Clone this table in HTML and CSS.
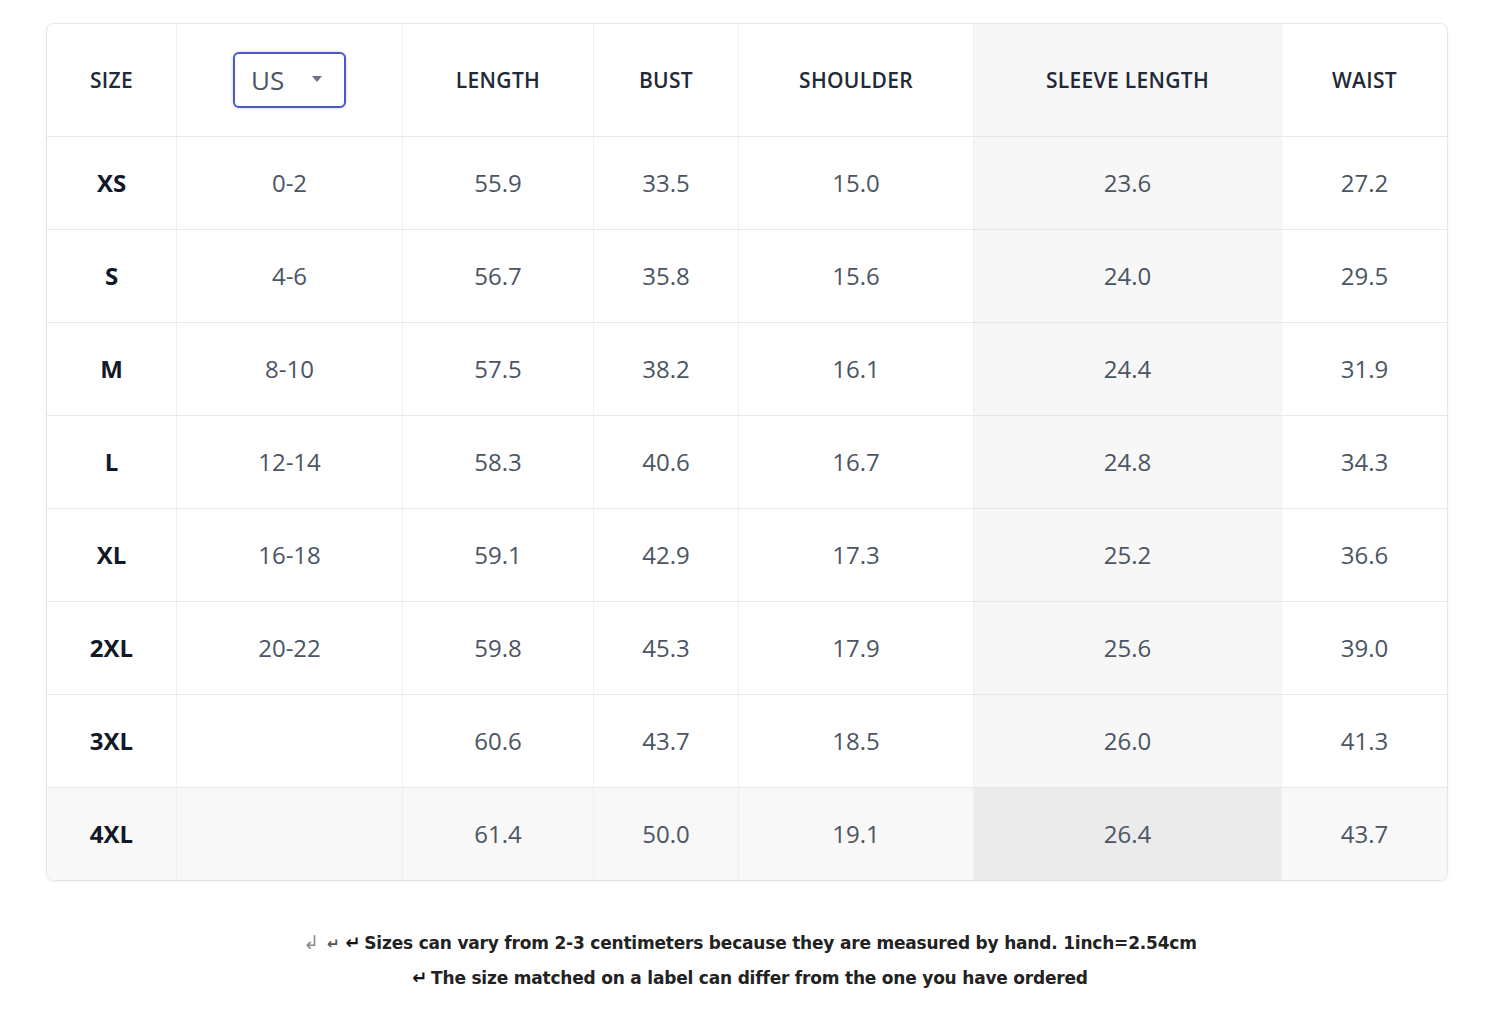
FILE: index.html
```html
<!DOCTYPE html>
<html lang="en">
<head>
  <meta charset="UTF-8">
  <meta name="viewport" content="width=device-width, initial-scale=1.0">
  <title>Size Chart</title>
  <link rel="stylesheet" href="styles.css">
</head>
<body>
  <!-- Tabla de tallas -->
  <div class="chart-wrap">
    <table class="size-table">
      <colgroup>
        <col class="c-size">
        <col class="c-us">
        <col class="c-length">
        <col class="c-bust">
        <col class="c-shoulder">
        <col class="c-sleeve">
        <col class="c-waist">
      </colgroup>
      <thead>
        <tr>
          <th>SIZE</th>
          <th>
            <div class="unit-select">
              <span>US</span>
              <svg class="caret" width="10" height="6" viewBox="0 0 10 6"><path d="M0 0h10L5 6z" fill="#6b7280"/></svg>
            </div>
          </th>
          <th>LENGTH</th>
          <th>BUST</th>
          <th>SHOULDER</th>
          <th class="hl">SLEEVE LENGTH</th>
          <th>WAIST</th>
        </tr>
      </thead>
      <tbody>
        <tr><td class="size">XS</td><td>0-2</td><td>55.9</td><td>33.5</td><td>15.0</td><td class="hl">23.6</td><td>27.2</td></tr>
        <tr><td class="size">S</td><td>4-6</td><td>56.7</td><td>35.8</td><td>15.6</td><td class="hl">24.0</td><td>29.5</td></tr>
        <tr><td class="size">M</td><td>8-10</td><td>57.5</td><td>38.2</td><td>16.1</td><td class="hl">24.4</td><td>31.9</td></tr>
        <tr><td class="size">L</td><td>12-14</td><td>58.3</td><td>40.6</td><td>16.7</td><td class="hl">24.8</td><td>34.3</td></tr>
        <tr><td class="size">XL</td><td>16-18</td><td>59.1</td><td>42.9</td><td>17.3</td><td class="hl">25.2</td><td>36.6</td></tr>
        <tr><td class="size">2XL</td><td>20-22</td><td>59.8</td><td>45.3</td><td>17.9</td><td class="hl">25.6</td><td>39.0</td></tr>
        <tr><td class="size">3XL</td><td></td><td>60.6</td><td>43.7</td><td>18.5</td><td class="hl">26.0</td><td>41.3</td></tr>
        <tr class="row-hl"><td class="size">4XL</td><td></td><td>61.4</td><td>50.0</td><td>19.1</td><td class="hl">26.4</td><td>43.7</td></tr>
      </tbody>
    </table>
  </div>

  <!-- Notas -->
  <div class="notes">
    <p><span class="mark m1">↲</span><span class="mark m2">↵</span><span class="mark m3">↵</span>Sizes can vary from 2-3 centimeters because they are measured by hand. 1inch=2.54cm</p>
    <p><span class="mark m3">↵</span>The size matched on a label can differ from the one you have ordered</p>
  </div>
</body>
</html>
```

FILE: styles.css
```css
body {
  margin: 0;
  background: #ffffff;
  font-family: "Open Sans", "Noto Sans", sans-serif;
}

/* Contenedor de la tabla */
.chart-wrap {
  padding: 23px 52px 0 46px;
}

.size-table {
  width: 1402px;
  table-layout: fixed;
  border-collapse: separate;
  border-spacing: 0;
  border: 1px solid #e3e5e8;
  border-radius: 8px;
  overflow: hidden;
  box-shadow: 0 1px 3px rgba(0, 0, 0, 0.06);
}

.c-size { width: 130px; }
.c-us { width: 226px; }
.c-length { width: 191px; }
.c-bust { width: 145px; }
.c-shoulder { width: 235px; }
.c-sleeve { width: 308px; }
.c-waist { width: 165px; }

.size-table th,
.size-table td {
  text-align: center;
  vertical-align: middle;
  padding: 0;
  border-bottom: 1px solid #e6e8eb;
  border-right: 1px solid #eef0f2;
}

.size-table th:last-child,
.size-table td:last-child {
  border-right: none;
}

.size-table tbody tr:last-child td {
  border-bottom: none;
}

.size-table th {
  height: 112px;
  font-size: 21px;
  font-weight: 600;
  color: #1f2937;
  letter-spacing: 0.3px;
}

.size-table td {
  height: 90px;
  padding-bottom: 2px;
  font-size: 24px;
  color: #4b5563;
}

.size-table td.size {
  font-weight: 700;
  color: #111827;
}

/* Columna y fila resaltadas */
.size-table .hl {
  background: #f7f7f7;
}

.size-table .row-hl td {
  background: #f8f8f8;
}

.size-table .row-hl td.hl {
  background: #ebebeb;
}

/* Selector de unidad */
.unit-select {
  box-sizing: border-box;
  width: 113px;
  height: 56px;
  margin: 0 auto;
  padding: 0 22px 0 16px;
  display: flex;
  align-items: center;
  justify-content: space-between;
  border: 2px solid #4b5bbd;
  border-radius: 6px;
  box-shadow: 0 0 3px rgba(75, 91, 189, 0.35);
  font-size: 26px;
  font-weight: 400;
  letter-spacing: 0;
  color: #4b5563;
}

.unit-select .caret {
  margin-top: -2px;
}

/* Notas inferiores */
.notes {
  margin-top: 44px;
  text-align: center;
  font-family: "DejaVu Sans", Verdana, sans-serif;
  font-weight: 700;
  font-size: 17px;
  color: #222222;
  letter-spacing: -0.2px;
}

.notes p {
  margin: 0;
  line-height: 34px;
}

.mark {
  display: inline-block;
  margin-right: 6px;
}

.m1 {
  font-size: 19px;
  color: #8a8a8a;
  font-weight: 400;
  margin-right: 8px;
}

.m2 {
  font-size: 15px;
  color: #555555;
  margin-right: 6px;
}

.m3 {
  font-size: 18px;
  color: #111111;
  margin-right: 4px;
}
```
